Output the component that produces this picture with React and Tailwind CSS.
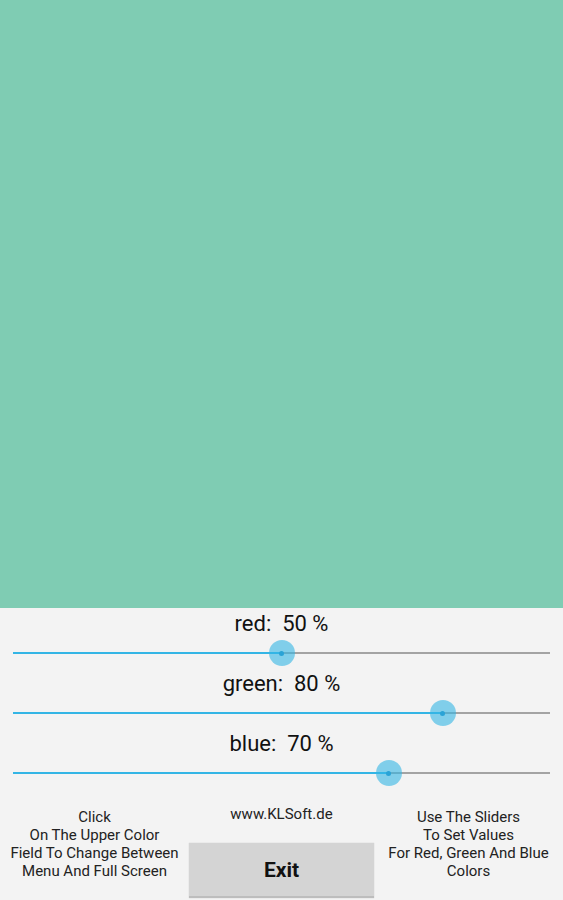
import React from 'react';

const channels = [
  { name: 'red', value: 50 },
  { name: 'green', value: 80 },
  { name: 'blue', value: 70 },
];

const Slider = ({ value }) => (
  <div className="h-[30px] px-[13px] flex items-center">
    <div className="relative w-full h-[2px] bg-[#a3a3a3]">
      <div className="absolute left-0 top-0 h-[2px] bg-[#33b5e5]" style={{ width: `${value}%` }} />
      <div
        className="absolute top-1/2 w-[26px] h-[26px] -ml-[13px] -mt-[13px] rounded-full bg-[#33b5e5]/60 flex items-center justify-center"
        style={{ left: `${value}%` }}
      >
        <div className="w-[5px] h-[5px] rounded-full bg-[#2aa3d6]" />
      </div>
    </div>
  </div>
);

export default function App() {
  const r = Math.round(2.55 * channels[0].value);
  const g = Math.round(2.55 * channels[1].value);
  const b = Math.round(2.55 * channels[2].value);

  return (
    <div className="w-[563px] h-[900px] flex flex-col bg-[#f3f3f3] overflow-hidden" style={{ fontFamily: 'Roboto, "Liberation Sans", sans-serif' }}>
      <div className="h-[608px] shrink-0" style={{ backgroundColor: `rgb(${r}, ${g}, ${b})` }} />

      <div className="flex flex-col">
        {channels.map((c) => (
          <div key={c.name}>
            <div className="h-[30px] flex items-center justify-center text-[22px] text-[#111]">
              <span className="whitespace-pre">{`${c.name}:  ${c.value} %`}</span>
            </div>
            <Slider value={c.value} />
          </div>
        ))}
      </div>

      <div className="flex">
        <div className="w-[189px] pt-[20px] text-center text-[15px] leading-[18px] text-[#222]">
          <div>Click</div>
          <div>On The Upper Color</div>
          <div>Field To Change Between</div>
          <div>Menu And Full Screen</div>
        </div>
        <div className="w-[185px] flex flex-col items-center">
          <div className="pt-[17px] text-[15px] leading-[18px] text-[#222]">www.KLSoft.de</div>
          <button className="mt-[20px] w-[185px] h-[55px] pt-[3px] bg-[#d4d4d4] border-b-2 border-[#bdbdbd] shadow-[0_0_1px_rgba(0,0,0,0.2)] text-[21px] font-bold text-[#111]">
            Exit
          </button>
        </div>
        <div className="flex-1 pt-[20px] text-center text-[15px] leading-[18px] text-[#222]">
          <div>Use The Sliders</div>
          <div>To Set Values</div>
          <div>For Red, Green And Blue</div>
          <div>Colors</div>
        </div>
      </div>
    </div>
  );
}
